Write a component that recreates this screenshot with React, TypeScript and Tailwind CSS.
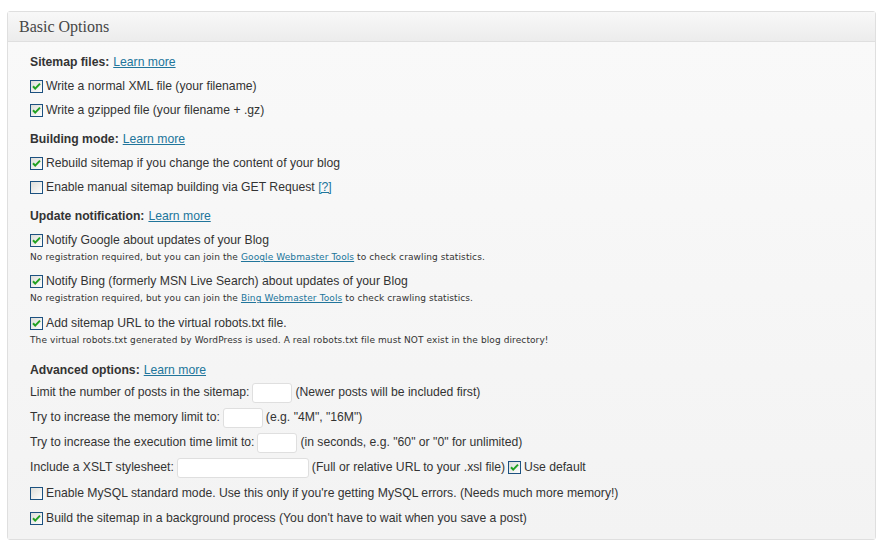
import React from "react";

const Box = ({ checked }: { checked?: boolean }) => (
  <svg width="13" height="13" viewBox="0 0 13 13" className="shrink-0">
    <defs>
      <linearGradient id="cbg" x1="0" y1="0" x2="1" y2="1">
        <stop offset="0" stopColor="#dcdcd7" />
        <stop offset="1" stopColor="#ffffff" />
      </linearGradient>
    </defs>
    <rect x="0.5" y="0.5" width="12" height="12" fill="url(#cbg)" stroke="#1c5180" />
    {checked && (
      <path d="M3 6.3 L5.2 8.6 L10 3.6" fill="none" stroke="#21a121" strokeWidth="2" />
    )}
  </svg>
);

const Link = ({ children }: { children: React.ReactNode }) => (
  <span className="text-[#21759b] underline">{children}</span>
);

const Row = ({ checked, children, cls = "" }: { checked?: boolean; children: React.ReactNode; cls?: string }) => (
  <div className={`flex h-[24px] items-center gap-[3px] ${cls}`}>
    <Box checked={checked} />
    <span>{children}</span>
  </div>
);

const Head = ({ title, cls = "" }: { title: string; cls?: string }) => (
  <div className={`flex h-[24px] items-center ${cls}`}>
    <span className="font-bold">{title}</span>
    <span className="ml-[4px]">
      <Link>Learn more</Link>
    </span>
  </div>
);

const Note = ({ children, cls = "" }: { children: React.ReactNode; cls?: string }) => (
  <div className={`flex h-[14px] items-center text-[9px] tracking-[0.1px] font-['DejaVu_Sans',sans-serif] ${cls}`}>
    {children}
  </div>
);

const Input = ({ w }: { w: string }) => (
  <span className={`inline-block h-[20px] ${w} rounded-[3px] border border-[#dfdfdf] bg-white mx-[3px]`} />
);

export default function App() {
  return (
    <div className="min-h-[549px] bg-white pt-[11px] pl-[7px] pr-[12px]">
      <div className="w-[869px] rounded-[3px] border border-[#dfdfdf] bg-[#f8f8f8]">
        <div className="flex h-[30px] items-center border-b border-[#dfdfdf] bg-gradient-to-b from-[#f8f8f8] to-[#ececec] pl-[11px] font-['Liberation_Serif',serif] text-[16px] text-[#464646]">
          Basic Options
        </div>
        <div className="bg-gradient-to-b from-[#f9f9f9] to-[#f3f3f3] pl-[22px] pt-[8px] pb-[8px] font-['Liberation_Sans',Arial,sans-serif] text-[12.2px] text-[#333]">
          <Head title="Sitemap files:" />
          <Row checked>Write a normal XML file (your filename)</Row>
          <Row checked>Write a gzipped file (your filename + .gz)</Row>
          <Head title="Building mode:" cls="mt-[5px]" />
          <Row checked>Rebuild sitemap if you change the content of your blog</Row>
          <Row>
            Enable manual sitemap building via GET Request <Link>[?]</Link>
          </Row>
          <Head title="Update notification:" cls="mt-[5px]" />
          <Row checked>Notify Google about updates of your Blog</Row>
          <Note cls="-mt-[1px]">
            No registration required, but you can join the&nbsp;<Link>Google Webmaster Tools</Link>&nbsp;to check crawling statistics.
          </Note>
          <Row checked cls="mt-[4px]">Notify Bing (formerly MSN Live Search) about updates of your Blog</Row>
          <Note cls="-mt-[1px]">
            No registration required, but you can join the&nbsp;<Link>Bing Webmaster Tools</Link>&nbsp;to check crawling statistics.
          </Note>
          <Row checked cls="mt-[5px]">Add sitemap URL to the virtual robots.txt file.</Row>
          <Note cls="-mt-[1px]">
            The virtual robots.txt generated by WordPress is used. A real robots.txt file must NOT exist in the blog directory!
          </Note>
          <Head title="Advanced options:" cls="mt-[10px]" />
          <div className="-mt-[2px] flex h-[25px] items-center">
            Limit the number of posts in the sitemap: <Input w="w-[40px]" /> (Newer posts will be included first)
          </div>
          <div className="flex h-[25px] items-center">
            Try to increase the memory limit to: <Input w="w-[40px]" /> (e.g. "4M", "16M")
          </div>
          <div className="flex h-[25px] items-center">
            Try to increase the execution time limit to: <Input w="w-[40px]" /> (in seconds, e.g. "60" or "0" for unlimited)
          </div>
          <div className="flex h-[25px] items-center">
            Include a XSLT stylesheet: <Input w="w-[132px]" /> (Full or relative URL to your .xsl file)
            <span className="ml-[3px] mr-[3px] inline-flex"><Box checked /></span>Use default
          </div>
          <Row cls="mt-[1px] h-[25px]">Enable MySQL standard mode. Use this only if you're getting MySQL errors. (Needs much more memory!)</Row>
          <Row checked cls="h-[25px]">Build the sitemap in a background process (You don't have to wait when you save a post)</Row>
        </div>
      </div>
    </div>
  );
}
